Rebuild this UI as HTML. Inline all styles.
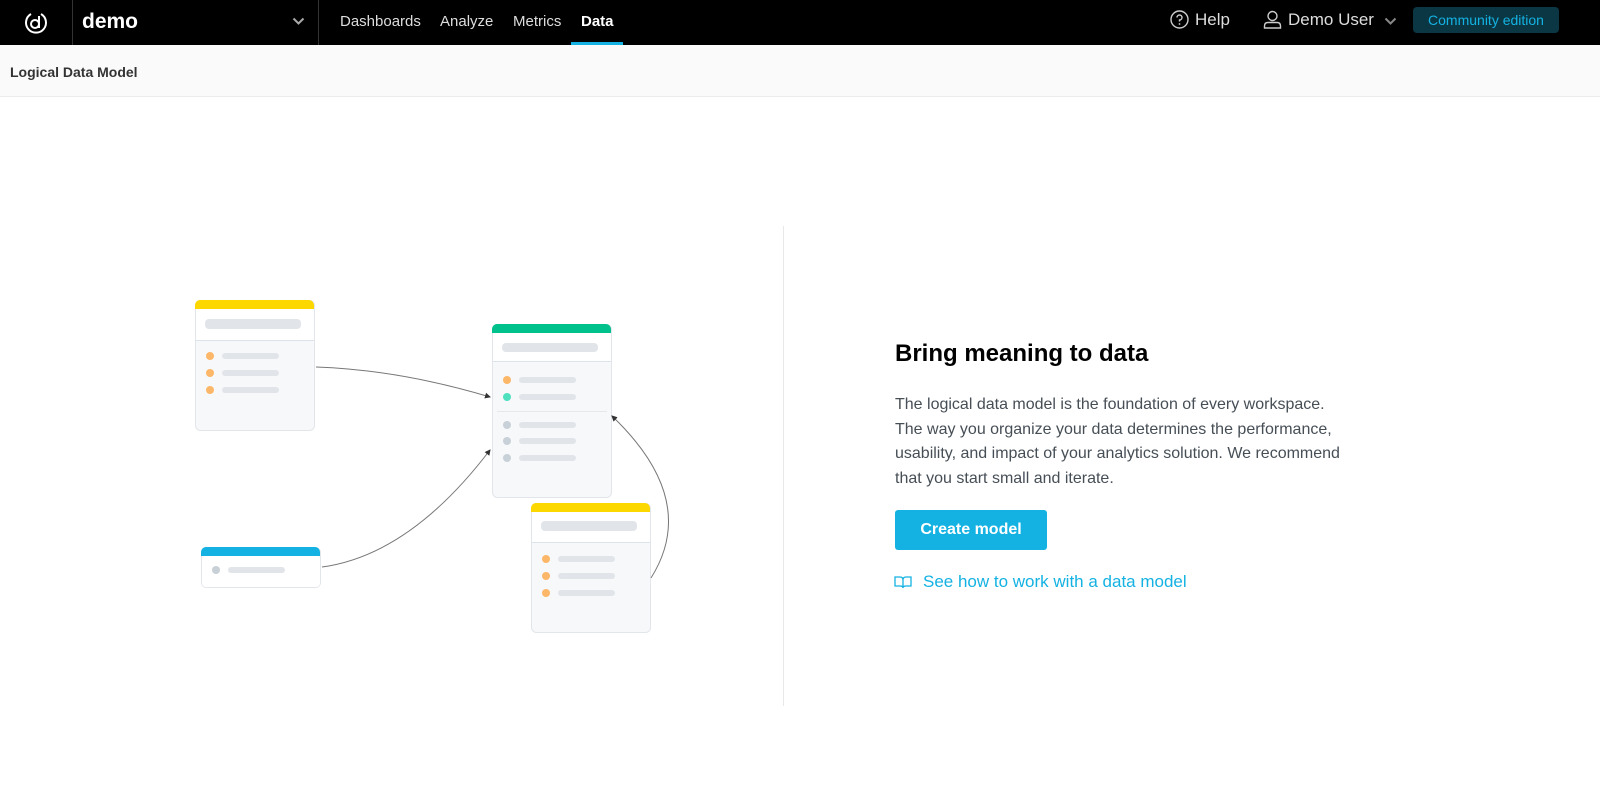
<!DOCTYPE html>
<html><head><meta charset="utf-8"><style>
*{box-sizing:border-box;margin:0;padding:0}
body{width:1600px;height:809px;background:#fff;font-family:"Liberation Sans",Arial,sans-serif;position:relative;overflow:hidden}
.top{position:absolute;left:0;top:0;width:1600px;height:45px;background:#000;color:#fff}
.sub{position:absolute;left:0;top:45px;width:1600px;height:52px;background:#fafafa;border-bottom:1px solid #ececec}
.abs{position:absolute}
</style></head><body>
<div class="top">
  <svg class="abs" style="left:23px;top:10px" width="26" height="26" viewBox="0 0 26 26"><path d="M8 4 A10 10 0 1 0 18 4" fill="none" stroke="#fff" stroke-width="2"/><circle cx="12" cy="14" r="4" fill="none" stroke="#fff" stroke-width="2"/><path d="M16 6 V18" stroke="#fff" stroke-width="2"/></svg>
  <div class="abs" style="left:72px;top:0;width:1px;height:45px;background:#333"></div>
  <div class="abs" style="left:82px;top:10px;font-size:21px;font-weight:bold">demo</div>
  <svg class="abs" style="left:292px;top:17px" width="13" height="9" viewBox="0 0 13 9"><path d="M1.5 1.5 L6.5 6.5 L11.5 1.5" fill="none" stroke="#aaa" stroke-width="2"/></svg>
  <div class="abs" style="left:318px;top:0;width:1px;height:45px;background:#333"></div>
  <div class="abs" style="left:340px;top:13px;font-size:15px;color:#ddd">Dashboards</div>
  <div class="abs" style="left:440px;top:13px;font-size:15px;color:#ddd">Analyze</div>
  <div class="abs" style="left:513px;top:13px;font-size:15px;color:#ddd">Metrics</div>
  <div class="abs" style="left:581px;top:13px;font-size:15px;font-weight:bold">Data</div>
  <div class="abs" style="left:571px;top:42px;width:52px;height:3px;background:#14b2e2"></div>
  <svg class="abs" style="left:1170px;top:10px" width="19" height="19" viewBox="0 0 19 19"><circle cx="9.5" cy="9.5" r="8.5" fill="none" stroke="#ccc" stroke-width="1.4"/><path d="M7 7.5 A2.5 2.5 0 1 1 9.5 10 V11.5" fill="none" stroke="#ccc" stroke-width="1.4"/><circle cx="9.5" cy="14" r="0.9" fill="#ccc"/></svg>
  <div class="abs" style="left:1195px;top:10px;font-size:17px;color:#ddd">Help</div>
  <svg class="abs" style="left:1263px;top:10px" width="19" height="19" viewBox="0 0 19 19"><circle cx="9.5" cy="6" r="4.5" fill="none" stroke="#ccc" stroke-width="1.4"/><path d="M1.5 18 V16 Q1.5 12.5 5 12.5 H14 Q17.5 12.5 17.5 16 V18 Z" fill="none" stroke="#ccc" stroke-width="1.4"/></svg>
  <div class="abs" style="left:1288px;top:10px;font-size:17px;color:#ddd">Demo User</div>
  <svg class="abs" style="left:1384px;top:17px" width="13" height="9" viewBox="0 0 13 9"><path d="M1.5 1.5 L6.5 6.5 L11.5 1.5" fill="none" stroke="#888" stroke-width="2"/></svg>
  <div class="abs" style="left:1413px;top:7px;width:146px;height:26px;border-radius:4px;background:#0b3744;color:#14b2e2;font-size:14px;text-align:center;line-height:26px">Community edition</div>
</div>
<div class="sub"><div class="abs" style="left:10px;top:19px;font-size:14px;font-weight:bold;color:#333">Logical Data Model</div></div>
<div class="abs" style="left:783px;top:226px;width:1px;height:480px;background:#e8e8e8"></div>
<svg class="abs" style="left:0;top:0" width="783" height="809" viewBox="0 0 783 809">
<defs><marker id="a" markerWidth="6" markerHeight="6" refX="5" refY="3" orient="auto"><path d="M0 0 L6 3 L0 6 Z" fill="#333"/></marker></defs>
<g stroke="#e2e6ea" fill="#f7f8fa">
<rect x="195.5" y="300.5" width="119" height="130" rx="5"/>
<rect x="492.5" y="324.5" width="119" height="173" rx="5"/>
<rect x="531.5" y="503.5" width="119" height="129" rx="5"/>
<rect x="201.5" y="547.5" width="119" height="40" rx="5"/>
</g>
<g fill="#fff"><rect x="196" y="309" width="118" height="31"/><rect x="493" y="333" width="118" height="28"/><rect x="532" y="512" width="118" height="30"/><rect x="202" y="556" width="118" height="31" rx="4" fill="#fff"/></g>
<path d="M195 340.5H315M492 361.5H612M531 542.5H651" stroke="#dde3ea"/>
<path d="M497 411.5H607" stroke="#e6e9ec"/>
<path d="M200 300 H309 a5 5 0 0 1 5 5 V309 H195 V305 a5 5 0 0 1 5-5Z" fill="#fdd800"/>
<path d="M497 324 H606 a5 5 0 0 1 5 5 V333 H492 V329 a5 5 0 0 1 5-5Z" fill="#00c18c"/>
<path d="M536 503 H645 a5 5 0 0 1 5 5 V512 H531 V508 a5 5 0 0 1 5-5Z" fill="#fdd800"/>
<path d="M206 547 H315 a5 5 0 0 1 5 5 V556 H201 V552 a5 5 0 0 1 5-5Z" fill="#14b2e2"/>
<g fill="#e1e5e9">
<rect x="205" y="319" width="96" height="10" rx="4"/><rect x="502" y="343" width="96" height="9" rx="4"/><rect x="541" y="521" width="96" height="10" rx="4"/>
<rect x="222" y="353" width="57" height="6" rx="3"/><rect x="222" y="370" width="57" height="6" rx="3"/><rect x="222" y="387" width="57" height="6" rx="3"/>
<rect x="519" y="377" width="57" height="6" rx="3"/><rect x="519" y="394" width="57" height="6" rx="3"/><rect x="519" y="422" width="57" height="6" rx="3"/><rect x="519" y="438" width="57" height="6" rx="3"/><rect x="519" y="455" width="57" height="6" rx="3"/>
<rect x="558" y="556" width="57" height="6" rx="3"/><rect x="558" y="573" width="57" height="6" rx="3"/><rect x="558" y="590" width="57" height="6" rx="3"/>
<rect x="228" y="567" width="57" height="6" rx="3"/>
</g>
<g fill="#fdb768"><circle cx="210" cy="356" r="4"/><circle cx="210" cy="373" r="4"/><circle cx="210" cy="390" r="4"/><circle cx="507" cy="380" r="4"/><circle cx="546" cy="559" r="4"/><circle cx="546" cy="576" r="4"/><circle cx="546" cy="593" r="4"/></g>
<circle cx="507" cy="397" r="4" fill="#4fe0bf"/>
<g fill="#c8d0d8"><circle cx="507" cy="425" r="4"/><circle cx="507" cy="441" r="4"/><circle cx="507" cy="458" r="4"/><circle cx="216" cy="570" r="4"/></g>
<g fill="none" stroke="#777" stroke-width="1">
<path d="M316 367 Q400 370 490 397" marker-end="url(#a)"/>
<path d="M322 567 Q410 555 490 450" marker-end="url(#a)"/>
<path d="M651 578 Q700 500 612 416" marker-end="url(#a)"/>
</g>
</svg>
<div class="abs" style="left:895px;top:340px;font-size:24px;font-weight:bold;color:#000">Bring meaning to data</div>
<div class="abs" style="left:895px;top:393px;width:462px;font-size:16px;line-height:24.5px;color:#464e56">The logical data model is the foundation of every workspace.<br>The way you organize your data determines the performance, usability, and impact of your analytics solution. We recommend that you start small and iterate.</div>
<div class="abs" style="left:895px;top:510px;width:152px;height:40px;background:#14b2e2;border-radius:3px;color:#fff;font-size:16px;font-weight:bold;text-align:center;line-height:40px">Create model</div>
<svg class="abs" style="left:894px;top:575px" width="18" height="14" viewBox="0 0 18 14"><path d="M1 2 H6 Q9 2 9 5 V13 Q9 11 6 11 H1 Z M17 2 H12 Q9 2 9 5 V13 Q9 11 12 11 H17 Z" fill="none" stroke="#14b2e2" stroke-width="1.3"/></svg>
<div class="abs" style="left:923px;top:572px;font-size:17px;color:#14b2e2">See how to work with a data model</div>
</body></html>
